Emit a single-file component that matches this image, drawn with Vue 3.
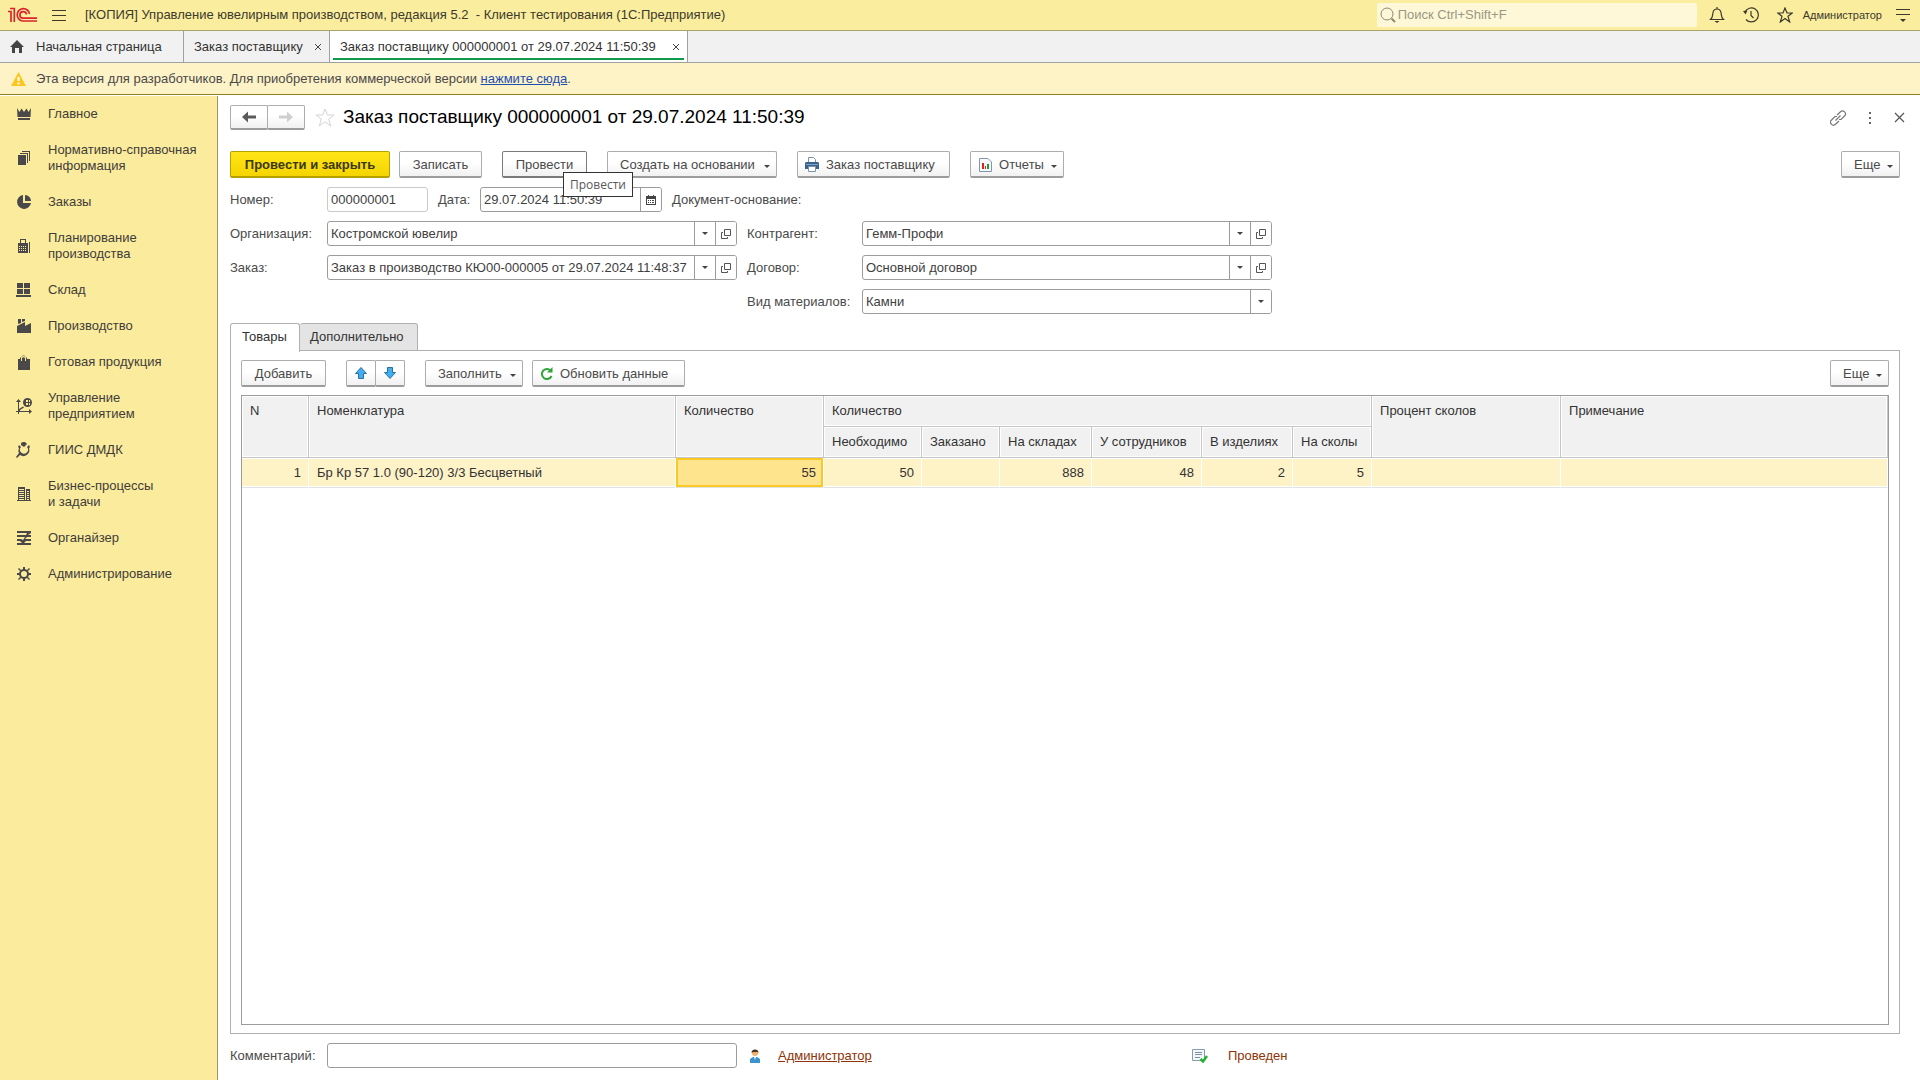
<script setup>
const nav = [
  { lines: ['Главное'], d: 'M1 2L3.5 6L5.5 2.5L8 6L10.5 2.5L12.5 6L15 2L14.500 11H1.5ZM2 12H14V14H2Z' },
  { lines: ['Нормативно-справочная', 'информация'], d: 'M2 5H10V15H2ZM4 3H12V13H11V4H4ZM6 1H14V11H13V2H6Z' },
  { lines: ['Заказы'], d: 'M7 1V9H15A7 7 0 1 1 7 1ZM9 1A6 6 0 0 1 15 7H9Z' },
  { lines: ['Планирование', 'производства'], d: 'M4 1H10V5H12V15H2V5H4ZM5 2V5H9V2ZM3 8V9H4V8ZM5 8V9H6V8ZM7 8V9H8V8ZM9 8V9H10V8ZM3 10V11H4V10ZM5 10V11H6V10ZM7 10V11H8V10ZM9 10V11H10V10ZM3 12V13H4V12ZM5 12V13H6V12ZM7 12V13H8V12ZM9 12V13H10V12ZM13 4H14V15H13Z' },
  { lines: ['Склад'], d: 'M1 1H7V6H1ZM8 1H14V6H8ZM1 7H7V12H1ZM8 7H14V12H8ZM0 13H15V15H0Z' },
  { lines: ['Производство'], d: 'M2 1H5V5L2 6ZM6 1H9V3L6 4ZM1 8L9 4V8L15 5V15H1Z' },
  { lines: ['Готовая продукция'], d: 'M2 5H4V4A4 4 0 0 1 11 4V5H14V16H2ZM5 5V7H6V4A2 2 0 0 1 9 4V7H10V4A2 2 0 0 0 5 4Z' },
  { lines: ['Управление', 'предприятием'], d: 'M2.500 1L5 4H3V11L7 8.500L8 9.500L4 12V13H13V11L16 13.5L13 16V14H3V16H2V14H0V13H2V4H0ZM11.500 0A4.500 4.500 0 1 1 11.500 9A4.500 4.500 0 0 1 11.500 0ZM10 2V4H12V2ZM10 5V7H12V5ZM13 2V4H14V2ZM13 5V7H14V5Z' },
  { lines: ['ГИИС ДМДК'], d: 'M5 1L7 0H9L11 2L8 5L5 3ZM3 3L5 5A4 4 0 1 0 11 5L13 3L14 5L13 6A6 6 0 0 1 4 13L1 16L0 15L3 11A6 6 0 0 1 3 6L2 5Z' },
  { lines: ['Бизнес-процессы', 'и задачи'], d: 'M2 1H9V14H10V3H14V14H15V15H1V14H2ZM3 3V4H8V3ZM3 5V6H8V5ZM3 7V8H8V7ZM3 9V10H8V9ZM3 11V12H8V11ZM3 13V14H8V13ZM11 5V6H13V5ZM11 7V8H13V7ZM11 9V10H13V9ZM11 11V12H13V11ZM11 13V14H13V13Z' },
  { lines: ['Органайзер'], d: 'M1 1H15V3L12 5H15V7H11L9 9H15V11H10L8 13H15V15H1V13H6L4 11H1V9H5L7 10L9 7H1V5H10L11 3H1Z' },
  { lines: ['Администрирование'], d: 'M7 1H9V3L11 4L13 2L14 3L12 5L13 7H15V9H13L12 11L14 13L13 14L11 12L9 13V15H7V13L5 12L3 14L2 13L4 11L3 9H1V7H3L4 5L2 3L3 2L5 4L7 3ZM8 5A3 3 0 1 0 8 11A3 3 0 1 0 8 5Z' },
]
const subColumns = ['Необходимо', 'Заказано', 'На складах', 'У сотрудников', 'В изделиях', 'На сколы']
const stock = ['50', '', '888', '48', '2', '5']
const leftFields = [
  { id: 'org', label: 'Организация:', value: 'Костромской ювелир', open: true },
  { id: 'order', label: 'Заказ:', value: 'Заказ в производство КЮ00-000005 от 29.07.2024 11:48:37', open: true },
]
const rightFields = [
  { id: 'partner', label: 'Контрагент:', value: 'Гемм-Профи', open: true },
  { id: 'contract', label: 'Договор:', value: 'Основной договор', open: true },
  { id: 'kind', label: 'Вид материалов:', value: 'Камни', open: false },
]
const fieldGroups = [leftFields, rightFields]
</script>

<template>
  <div class="app">
    <header class="topbar">
      <svg class="logo" width="30" height="16" viewBox="0 0 30 16" fill="none" stroke="#d9232e" stroke-width="1.700">
        <path d="M0 4.500H3V15M2 1.500H6.300V15" />
        <path d="M21.500 7A6.200 6.200 0 1 0 15 14H29M18.500 7.500A3.300 3.300 0 1 0 15 11.200H29" />
      </svg>
      <button class="icon-btn" aria-label="Меню">
        <svg width="14" height="11" viewBox="0 0 14 11"><path d="M0 0.500H14M0 5.500H14M0 10.500H14" stroke="#3c3a2c" /></svg>
      </button>
      <span class="app-title">[КОПИЯ] Управление ювелирным производством, редакция 5.2&nbsp; - Клиент тестирования&nbsp;(1С:Предприятие)</span>
      <label class="search">
        <svg width="16" height="16" viewBox="0 0 16 16" fill="none" stroke="#8e8a72"><circle cx="7" cy="7" r="6" /><path d="M11.500 11.500L15 15" stroke-width="2" /></svg>
        <input type="search" aria-label="Поиск" placeholder="Поиск Ctrl+Shift+F" />
      </label>
      <div class="tools">
        <button class="icon-btn" aria-label="Уведомления">
          <svg width="16" height="16" viewBox="0 0 16 16" fill="none" stroke="#3c3a2c" stroke-width="1.200"><path d="M1.500 12.500C4 10.500 3.500 8 4 5.500C4.500 3 6 2 8 2S11.500 3 12 5.500C12.500 8 12 10.500 14.500 12.500ZM8 2V0" /><path d="M5.500 14H10.500L8 16Z" fill="#3c3a2c" stroke="none" /></svg>
        </button>
        <button class="icon-btn" aria-label="История">
          <svg width="16" height="16" viewBox="0 0 16 16" fill="none" stroke="#3c3a2c" stroke-width="1.200"><path d="M2 5A7 7 0 1 1 3 12.500M8 4V8.500L10.500 11" /><path d="M0 4L4.500 3.500L2.500 7.500Z" fill="#3c3a2c" stroke="none" /></svg>
        </button>
        <button class="icon-btn" aria-label="Избранное">
          <svg width="16" height="16" viewBox="0 0 16 16" fill="none" stroke="#3c3a2c" stroke-width="1.200"><path d="M8 1L10 6H15.200L11 9.300L12.700 15L8 11.600L3.300 15L5 9.300L0.800 6H6Z" /></svg>
        </button>
      </div>
      <a class="user" href="#">Администратор</a>
      <button class="icon-btn" aria-label="Настройки">
        <svg width="14" height="13" viewBox="0 0 14 13"><path d="M0 0.500H14M0 5.500H14" stroke="#3c3a2c" /><path d="M4 10H10L7 13Z" fill="#3c3a2c" /></svg>
      </button>
    </header>

    <nav class="tabs">
      <a class="tab home" href="#">
        <svg width="14" height="13" viewBox="0 0 14 13"><path d="M7 0L14 7H12V13H9V8H5V13H2V7H0Z" fill="#444" /></svg>
        Начальная страница
      </a>
      <div class="tab list"><a href="#">Заказ поставщику</a><button class="close" aria-label="Закрыть">
        <svg width="8" height="8" viewBox="0 0 8 8"><path d="M1 1L7 7M7 1L1 7" stroke="#444" /></svg></button></div>
      <div class="tab active"><a href="#">Заказ поставщику 000000001 от 29.07.2024 11:50:39</a><button class="close" aria-label="Закрыть">
        <svg width="8" height="8" viewBox="0 0 8 8"><path d="M1 1L7 7M7 1L1 7" stroke="#444" /></svg></button></div>
    </nav>

    <div class="notice">
      <svg width="15" height="14" viewBox="0 0 15 14"><path d="M7.500 0L15 14H0Z" fill="#fcc720" /><path d="M6.500 5H8.500V9H6.500ZM6.500 10.500H8.500V12.500H6.500Z" fill="#fff" /></svg>
      <span>Эта версия для разработчиков. Для приобретения коммерческой версии <a href="#">нажмите сюда</a>.</span>
    </div>

    <div class="body">
      <aside class="sidebar">
        <a v-for="item in nav" :key="item.d" class="nav-item" href="#">
          <svg width="16" height="16" viewBox="0 0 16 16"><path :d="item.d" fill="#4a4848" fill-rule="evenodd" /></svg>
          <span><span v-for="line in item.lines" :key="line" class="line">{{ line }}</span></span>
        </a>
      </aside>

      <main class="main">
        <div class="heading">
          <div class="pair">
            <button class="btn" aria-label="Назад"><svg width="14" height="12" viewBox="0 0 14 12"><path d="M0 6L6 0.500V4.500H14V7.500H6V11.500Z" fill="#5a5a5a" /></svg></button>
            <button class="btn" aria-label="Вперед"><svg width="14" height="12" viewBox="0 0 14 12"><path d="M14 6L8 0.500V4.500H0V7.500H8V11.500Z" fill="#cfcfcf" /></svg></button>
          </div>
          <button class="icon-btn fav" aria-label="В избранное">
            <svg width="20" height="19" viewBox="0 0 20 19" fill="none" stroke="#d4d4d4"><path d="M10 1L12.400 7H19L13.700 11L15.700 18L10 13.800L4.300 18L6.300 11L1 7H7.600Z" /></svg>
          </button>
          <h1>Заказ поставщику 000000001 от 29.07.2024 11:50:39</h1>
          <div class="window-tools">
            <button class="icon-btn" aria-label="Ссылка"><svg width="16" height="16" viewBox="0 0 16 16" fill="none" stroke="#777" stroke-width="1.200"><path d="M7 5L10.500 1.800A2.900 2.900 0 0 1 14.500 6L11 9.500L9 9.500M9 11L5.500 14.300A2.900 2.900 0 0 1 1.500 10L5 6.500L7 6.500M5.500 10.500L10.500 5.500" /></svg></button>
            <button class="icon-btn" aria-label="Еще"><svg width="4" height="12" viewBox="0 0 4 12"><path d="M1 0H3V2H1ZM1 5H3V7H1ZM1 10H3V12H1Z" fill="#666" /></svg></button>
            <button class="icon-btn" aria-label="Закрыть"><svg width="11" height="11" viewBox="0 0 11 11"><path d="M1 1L10 10M10 1L1 10" stroke="#555" stroke-width="1.200" /></svg></button>
          </div>
        </div>

        <div class="toolbar">
          <button class="btn primary">Провести и закрыть</button>
          <button class="btn save second">Записать</button>
          <div class="hovered">
            <button class="btn w-s dark">Провести</button>
            <div class="tooltip" role="tooltip">Провести</div>
          </div>
          <button class="btn drop w-xl">Создать на основании<i class="caret"></i></button>
          <button class="btn with-icon">
            <svg width="14" height="15" viewBox="0 0 14 15"><path d="M3.500 6V0.500H8.500L10.500 2.500V6" fill="#fff" stroke="#7f93a8" /><path d="M1 5H13L14 6V12H0V6Z" fill="#38628f" /><path d="M1 7H13V8H1Z" fill="#83a3c4" /><path d="M3.500 9.500H10.500V14.500H3.500Z" fill="#fff" stroke="#7f93a8" /></svg>
            Заказ поставщику
          </button>
          <button class="btn drop reports">
            <svg width="13" height="14" viewBox="0 0 13 14"><path d="M0.500 0.500H9L12.500 4V13.500H0.500Z" fill="#f6f9fc" stroke="#8496a8" /><path d="M3 5H5V11H3Z" fill="#e2231a" /><path d="M6 8H7V11H6Z" fill="#e2231a" /><path d="M8 6H10V11H8Z" fill="#1f9a2b" /></svg>
            Отчеты<i class="caret"></i>
          </button>
          <button class="btn drop more">Еще<i class="caret"></i></button>
        </div>

        <div class="form">
          <div class="row">
            <label class="lbl" for="num">Номер:</label>
            <div class="field number"><input id="num" type="text" value="000000001" /></div>
            <label class="date-lbl" for="date">Дата:</label>
            <div class="field date">
              <input id="date" type="text" value="29.07.2024 11:50:39" />
              <button class="cell" aria-label="Календарь"><svg width="10" height="10" viewBox="0 0 10 10"><path d="M0 1H2V0H3V1H7V0H8V1H10V10H0ZM1 4V9H9V4ZM2 5H3V6H2ZM4 5H5V6H4ZM6 5H8V6H6ZM2 7H3V8H2ZM4 7H5V8H4ZM6 7H8V8H6Z" fill="#444" fill-rule="evenodd" /></svg></button>
            </div>
            <span>Документ-основание:</span>
          </div>
          <div class="groups">
            <div v-for="(group, i) in fieldGroups" :key="i" class="group">
              <div v-for="f in group" :key="f.id" class="row">
                <label class="lbl" :class="{ wide: i === 1 }" :for="f.id">{{ f.label }}</label>
                <div class="field combo">
                  <select :id="f.id"><option>{{ f.value }}</option></select>
                  <span class="cell"><i class="caret"></i></span>
                  <button v-if="f.open" class="cell" aria-label="Открыть"><svg width="10" height="10" viewBox="0 0 10 10" fill="none" stroke="#555"><path d="M3.500 0.500H9.500V6.500H3.500ZM2 3.500H0.500V9.500H6.500V8" /></svg></button>
                </div>
              </div>
            </div>
          </div>
        </div>

        <div class="page-tabs" role="tablist">
          <button class="page-tab current" role="tab">Товары</button>
          <button class="page-tab" role="tab">Дополнительно</button>
        </div>
        <section class="panel">
          <div class="toolbar inner">
            <button class="btn w-s">Добавить</button>
            <div class="pair arrows">
              <button class="btn" aria-label="Вверх"><svg width="12" height="12" viewBox="0 0 12 12"><path d="M6 0.500L11.500 6.500H8.500V11.500H3.500V6.500H0.500Z" fill="#41aef0" stroke="#2a6f9e" /></svg></button>
              <button class="btn" aria-label="Вниз"><svg width="12" height="12" viewBox="0 0 12 12"><path d="M6 11.500L0.500 5.500H3.500V0.500H8.500V5.500H11.500Z" fill="#41aef0" stroke="#2a6f9e" /></svg></button>
            </div>
            <button class="btn drop fill">Заполнить<i class="caret"></i></button>
            <button class="btn with-icon second">
              <svg width="13" height="13" viewBox="0 0 13 13"><path d="M10.500 3.500A5 5 0 1 0 11.500 9" fill="none" stroke="#2fa33a" stroke-width="2" /><path d="M12.500 0V5.500H7Z" fill="#2fa33a" /></svg>
              Обновить данные
            </button>
            <button class="btn drop more">Еще<i class="caret"></i></button>
          </div>
          <div class="grid">
            <table>
              <colgroup>
                <col class="c-n" /><col class="c-name" /><col class="c-qty" /><col class="c-need" /><col class="c-ord" /><col class="c-stock" />
                <col class="c-emp" /><col class="c-prod" /><col class="c-chip" /><col class="c-pct" /><col />
              </colgroup>
              <thead>
                <tr>
                  <th rowspan="2">N</th><th rowspan="2">Номенклатура</th><th rowspan="2">Количество</th>
                  <th colspan="6">Количество</th><th rowspan="2">Процент сколов</th><th rowspan="2">Примечание</th>
                </tr>
                <tr><th v-for="c in subColumns" :key="c">{{ c }}</th></tr>
              </thead>
              <tbody>
                <tr>
                  <td class="num">1</td><td>Бр Кр 57 1.0 (90-120) 3/3 Бесцветный</td><td class="num selected">55</td>
                  <td v-for="(v, i) in stock" :key="i" class="num">{{ v }}</td><td></td><td></td>
                </tr>
              </tbody>
            </table>
          </div>
        </section>

        <footer class="footer">
          <label class="lbl" for="comment">Комментарий:</label>
          <div class="field comment"><input id="comment" type="text" /></div>
          <svg class="person" width="10" height="14" viewBox="0 0 10 14"><circle cx="5" cy="4" r="3" fill="#f0b06c" /><path d="M1.500 4A3.500 3.500 0 0 1 8.500 4L7.500 3H3Z" fill="#4b3324" /><path d="M0 14V10L3 8H7L10 10V14Z" fill="#3b93cf" /><path d="M4 8H6L5 11Z" fill="#fff" /></svg>
          <a class="author" href="#">Администратор</a>
          <span class="status">
            <svg width="16" height="14" viewBox="0 0 16 14"><path d="M0.500 0.500H12.500V11.500H0.500Z" fill="#f4f7fa" stroke="#8b9aac" /><path d="M3 3.500H10M3 5.500H10M3 8.500H8" stroke="#7f90a4" /><path d="M8.500 10L11 12.500L15 7" fill="none" stroke="#27b234" stroke-width="2.500" /></svg>
            Проведен
          </span>
        </footer>
      </main>
    </div>
  </div>
</template>

<style>
body { margin: 0; background: #fff; }
</style>

<style scoped>
.app, .app * { box-sizing: border-box; }
.app {
  min-height: 100vh;
  display: flex;
  flex-direction: column;
  font: 13px/16px "Liberation Sans", Arial, sans-serif;
  color: #4a4a4a;
}
button, input, select { font: inherit; color: inherit; margin: 0; }
svg { display: block; flex: none; }
a { color: inherit; text-decoration: none; }
.icon-btn { border: 0; background: none; padding: 0; display: flex; }

.topbar {
  height: 31px;
  display: flex;
  align-items: center;
  gap: 14px;
  padding: 0 10px 0 8px;
  background: #fbed9e;
  border-bottom: 1px solid #aba36c;
  color: #3c3a2c;
}
.app-title { flex: 1; padding-left: 5px; white-space: nowrap; }
.tools { display: flex; gap: 18px; margin: 0 -4px 0 -2px; }
.search {
  width: 320px;
  height: 24px;
  display: flex;
  align-items: center;
  gap: 2px;
  padding-left: 3px;
  background: #fef8d8;
  border-radius: 2px;
}
.search input { flex: 1; min-width: 0; border: 0; padding: 0; background: none; outline: 0; }
.search input::placeholder { color: #9a9784; opacity: 1; }
.user { font-size: 11px; }

.tabs { height: 32px; display: flex; background: #f1f1f1; border-bottom: 1px solid #a0a0a0; color: #333; }
.tab { display: flex; align-items: center; justify-content: space-between; gap: 8px; padding: 0 7px 0 10px; border-right: 1px solid #a0a0a0; white-space: nowrap; }
.tab.home { min-width: 184px; justify-content: flex-start; gap: 12px; }
.tab.list { min-width: 146px; }
.tab.active { min-width: 358px; position: relative; background: #fff; }
.tab.active::after { content: ""; position: absolute; left: 3px; right: 3px; bottom: 2px; height: 2px; background: #0d9a4c; }
.close { border: 0; background: none; padding: 0; }

.notice {
  height: 32px;
  display: flex;
  align-items: center;
  gap: 10px;
  padding-left: 11px;
  background: #fef2c7;
  border-bottom: 1px solid #93801f;
}
.notice a { color: #1d4fb0; text-decoration: underline; }

.body { flex: 1; display: flex; padding-top: 1px; }
.sidebar { width: 218px; flex: none; background: #fbeb9d; border-right: 1px solid #a1985c; color: #3f3d3a; }
.nav-item { display: flex; align-items: center; gap: 16px; padding: 10px 0 10px 16px; white-space: nowrap; }
.line { display: block; }

.main { flex: 1; min-width: 0; display: flex; flex-direction: column; padding: 9px 20px 12px 12px; }
.heading { display: flex; align-items: center; height: 25px; }
.pair { display: flex; }
.pair .btn { width: 38px; height: 25px; padding: 0; }
.pair .btn + .btn { margin-left: -1px; }
.fav { margin: 0 8px 0 10px; }
h1 { margin: 0; padding-bottom: 2px; font-size: 19px; line-height: 22px; font-weight: 400; color: #000; }
.window-tools { margin-left: auto; display: flex; align-items: center; gap: 22px; margin-right: -5px; }

.btn {
  height: 27px;
  display: flex;
  align-items: center;
  justify-content: center;
  gap: 7px;
  padding: 1px 6px 0;
  white-space: nowrap;
  border: 1px solid #adadad;
  border-bottom: 2px solid #9c9c9c;
  border-radius: 2px;
  background: linear-gradient(#fff 45%, #f1f1f1);
}
.toolbar { display: flex; gap: 20px; margin-top: 21px; }
.primary { width: 160px; font-weight: 700; color: #3b3812; border-color: #b5a000; background: linear-gradient(#ffe518, #f5d500); }
.second { margin-left: -11px; }
.save { width: 83px; }
.w-s { width: 85px; }
.w-xl { width: 170px; }
.fill { width: 98px; }
.drop { justify-content: space-between; padding-left: 12px; }
.with-icon { width: 153px; justify-content: flex-start; padding-left: 7px; }
.reports { width: 94px; padding-left: 8px; }
.dark { border-color: #7b7b7b; }
.more { width: 59px; margin-left: auto; }
.caret { width: 0; height: 0; border: 3px solid transparent; border-top-color: #444; border-bottom: 0; }
.btn .caret { margin-top: 4px; }
.hovered { position: relative; }
.tooltip {
  position: absolute;
  left: 61px;
  top: 21px;
  padding: 3px 6px;
  border: 1px solid #333;
  background: #fff;
  font: 12px/17px "Open Sans", "Noto Sans", sans-serif;
  color: #575757;
}

.form { display: flex; flex-direction: column; gap: 9px; margin-top: 9px; }
.groups { display: flex; gap: 10px; }
.group { display: flex; flex-direction: column; gap: 9px; }
.row { display: flex; align-items: center; white-space: nowrap; }
.lbl { width: 97px; flex: none; }
.lbl.wide { width: 115px; }
.field {
  height: 25px;
  display: flex;
  border: 1px solid #9c9c9c;
  border-radius: 3px;
  background: #fff;
  overflow: hidden;
  color: #404040;
}
.field input, .field select { flex: 1; min-width: 0; border: 0; padding: 0 3px; background: none; outline: 0; appearance: none; }
.number { width: 101px; border-color: #cacaca; }
.date-lbl { width: 42px; margin-left: 10px; }
.date { width: 182px; margin-right: 10px; }
.combo, .comment { width: 410px; }
.cell { width: 21px; flex: none; display: flex; align-items: center; justify-content: center; padding: 0; border: 0; border-left: 1px solid #9c9c9c; background: #fff; }

.page-tabs { display: flex; margin-top: 9px; height: 28px; position: relative; z-index: 1; }
.page-tab { width: 118px; height: 28px; padding: 0 0 1px 10px; text-align: left; border: 1px solid #b0b0b0; border-left: 0; border-radius: 3px 3px 0 0; background: #e4e4e4; color: #333; }
.page-tab.current { width: 70px; height: 29px; padding-bottom: 3px; padding-left: 11px; border-left: 1px solid #b0b0b0; border-bottom: 0; background: #fff; }
.panel { flex: 1; display: flex; flex-direction: column; margin-top: -1px; padding: 9px 10px 8px; border: 1px solid #b0b0b0; }
.inner { margin-top: 0; }
.arrows .btn { width: 30px; height: 27px; }
.grid { flex: 1; margin-top: 8px; border: 1px solid #9c9c9c; }
table { width: 100%; table-layout: fixed; border-collapse: separate; border-spacing: 0; color: #333; }
.c-n { width: 67px; }
.c-name { width: 367px; }
.c-qty { width: 148px; }
.c-need { width: 98px; }
.c-ord { width: 78px; }
.c-stock { width: 92px; }
.c-emp { width: 110px; }
.c-prod { width: 91px; }
.c-chip { width: 79px; }
.c-pct { width: 189px; }
th, td { text-align: left; white-space: nowrap; vertical-align: top; padding: 7px 7px 0 8px; }
th { height: 31px; font-weight: 400; background: #f1f1f1; border-right: 1px solid #c6c6c6; border-bottom: 1px solid #c6c6c6; box-shadow: inset 0 0 0 1px #fff; }
td { height: 30px; background: #fef2c7; border-right: 1px solid #fff; border-bottom: 1px solid #e2e2e2; box-shadow: inset 0 1px #fff, inset 0 -1px #fff; }
.num { text-align: right; }
.selected { background: #fde48d; box-shadow: inset 0 0 0 2px #fbc924; }

.footer { display: flex; align-items: center; margin-top: 9px; }
.person { margin: 0 18px 0 13px; }
.author, .status { color: #8f3407; }
.author { text-decoration: underline; width: 414px; }
.status { display: flex; align-items: center; gap: 20px; }
</style>
